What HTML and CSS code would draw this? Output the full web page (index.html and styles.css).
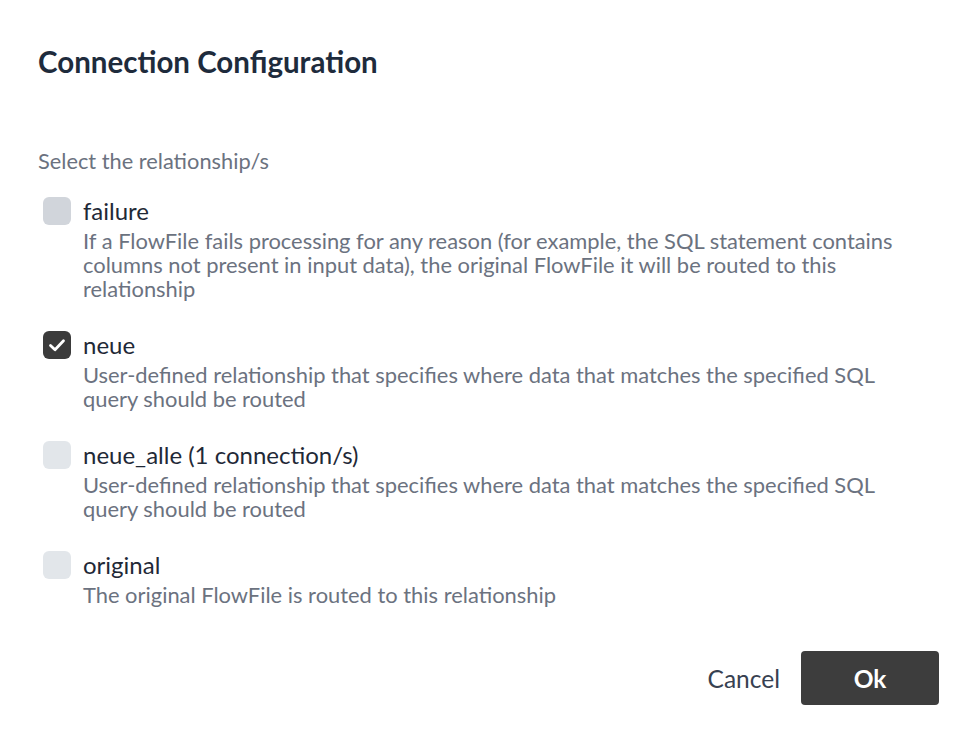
FILE: index.html
```html
<!DOCTYPE html>
<html>
<head>
<meta charset="utf-8">
<link rel="stylesheet" href="styles.css">
</head>
<body>
<div class="dialog">
  <h1 class="title">Connection Configuration</h1>
  <div class="label">Select the relationship/s</div>
  <ul class="list">
    <li class="item">
      <span class="box box-hover"></span>
      <div class="text">
        <div class="name">failure</div>
        <div class="desc">If a FlowFile fails processing for any reason (for example, the SQL statement contains columns not present in input data), the original FlowFile it will be routed to this relationship</div>
      </div>
    </li>
    <li class="item">
      <span class="box box-checked">
        <svg viewBox="0 0 28 28" width="28" height="28"><path d="M7.5 14.5 L12 18.8 L20.5 9.8" fill="none" stroke="#fff" stroke-width="2.8" stroke-linecap="round" stroke-linejoin="round"/></svg>
      </span>
      <div class="text">
        <div class="name">neue</div>
        <div class="desc">User-defined relationship that specifies where data that matches the specified SQL query should be routed</div>
      </div>
    </li>
    <li class="item">
      <span class="box"></span>
      <div class="text">
        <div class="name">neue_alle (1 connection/s)</div>
        <div class="desc">User-defined relationship that specifies where data that matches the specified SQL query should be routed</div>
      </div>
    </li>
    <li class="item">
      <span class="box"></span>
      <div class="text">
        <div class="name">original</div>
        <div class="desc">The original FlowFile is routed to this relationship</div>
      </div>
    </li>
  </ul>
  <div class="actions">
    <button class="btn-cancel">Cancel</button>
    <button class="btn-ok">Ok</button>
  </div>
</div>
</body>
</html>
```
FILE: styles.css
```css
html, body {
  margin: 0;
  padding: 0;
  background: #ffffff;
}
body {
  font-family: Lato, "Open Sans", sans-serif;
}
.dialog {
  padding: 46px 32px 0 38px;
}
.title {
  margin: 0;
  font-size: 29.5px;
  line-height: 32px;
  font-weight: 700;
  color: #1e2b3c;
}
.label {
  margin-top: 71px;
  font-size: 21.8px;
  line-height: 24px;
  color: #6b7280;
}
.list {
  list-style: none;
  margin: 23px 0 0 0;
  padding: 0;
  display: flex;
  flex-direction: column;
  gap: 29px;
}
.item {
  display: flex;
  gap: 12px;
  padding-left: 5px;
}
.box {
  flex: none;
  width: 28px;
  height: 28px;
  margin-top: 1px;
  border-radius: 6px;
  background: #e2e6ea;
  display: flex;
}
.box-hover {
  background: #d1d5db;
}
.box-checked {
  background: #3b3b3b;
}
.text {
  max-width: 827px;
}
.name {
  font-size: 24px;
  line-height: 30px;
  color: #1f2937;
}
.desc {
  margin-top: 3px;
  font-size: 21.9px;
  line-height: 24px;
  color: #6b7280;
}
.actions {
  display: flex;
  justify-content: flex-end;
  align-items: center;
  gap: 21px;
  margin-top: 44px;
}
.btn-cancel {
  background: none;
  border: none;
  padding: 0;
  font-family: Lato, sans-serif;
  font-size: 24.5px;
  color: #374151;
  cursor: pointer;
}
.btn-ok {
  width: 138px;
  height: 54px;
  border: none;
  border-radius: 4px;
  background: #3d3d3d;
  color: #ffffff;
  font-family: Lato, sans-serif;
  font-size: 24.5px;
  font-weight: 700;
  cursor: pointer;
}
```
